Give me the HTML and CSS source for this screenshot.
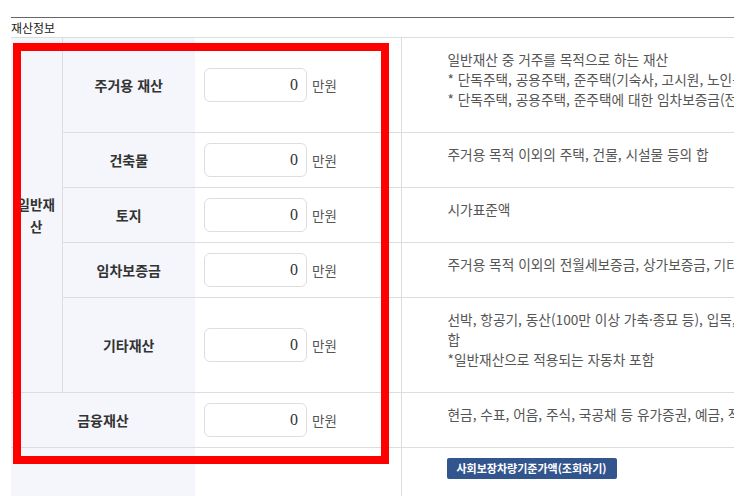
FILE: index.html
```html
<!DOCTYPE html>
<html lang="ko">
<head>
<meta charset="utf-8">
<title>재산정보</title>
<link rel="stylesheet" href="styles.css">
</head>
<body>
<div class="page">
  <section class="section">
    <h3 class="section-title">재산정보</h3>
    <table class="asset-table">
      <colgroup>
        <col class="c-group">
        <col class="c-label">
        <col class="c-input">
        <col class="c-desc">
      </colgroup>
      <tbody>
        <tr>
          <th class="group-label" rowspan="5">일반재산</th>
          <th class="label">주거용 재산</th>
          <td class="input-cell"><input class="amount" type="text" value="0"><span class="unit">만원</span></td>
          <td class="desc">일반재산 중 거주를 목적으로 하는 재산<br>* 단독주택, 공용주택, 준주택(기숙사, 고시원, 노인복지주택, 오피스텔)<br>* 단독주택, 공용주택, 준주택에 대한 임차보증금(전월세 보증금)</td>
        </tr>
        <tr>
          <th class="label">건축물</th>
          <td class="input-cell"><input class="amount" type="text" value="0"><span class="unit">만원</span></td>
          <td class="desc">주거용 목적 이외의 주택, 건물, 시설물 등의 합</td>
        </tr>
        <tr>
          <th class="label">토지</th>
          <td class="input-cell"><input class="amount" type="text" value="0"><span class="unit">만원</span></td>
          <td class="desc">시가표준액</td>
        </tr>
        <tr>
          <th class="label">임차보증금</th>
          <td class="input-cell"><input class="amount" type="text" value="0"><span class="unit">만원</span></td>
          <td class="desc">주거용 목적 이외의 전월세보증금, 상가보증금, 기타 보증금의 합</td>
        </tr>
        <tr>
          <th class="label">기타재산</th>
          <td class="input-cell"><input class="amount" type="text" value="0"><span class="unit">만원</span></td>
          <td class="desc">선박, 항공기, 동산(100만 이상 가축·종묘 등), 입목, 어업권, 회원권, 각종 권리 등의<br>합<br>*일반재산으로 적용되는 자동차 포함</td>
        </tr>
        <tr>
          <th class="label" colspan="2">금융재산</th>
          <td class="input-cell"><input class="amount" type="text" value="0"><span class="unit">만원</span></td>
          <td class="desc">현금, 수표, 어음, 주식, 국공채 등 유가증권, 예금, 적금, 보험 등의 합</td>
        </tr>
        <tr class="btn-row">
          <th class="label blank" colspan="2"></th>
          <td class="input-cell"></td>
          <td class="desc btn-cell"><button class="lookup-btn" type="button">사회보장차량기준가액(조회하기)</button></td>
        </tr>
      </tbody>
    </table>
  </section>
  <div class="highlight-box"></div>
</div>
</body>
</html>
```

FILE: styles.css
```css
html, body {
  margin: 0;
  padding: 0;
  overflow: hidden;
  background: #fff;
}

body {
  font-family: "Noto Sans CJK KR", "Noto Sans", sans-serif;
  color: #333;
}

.page {
  position: relative;
  width: 734px;
  height: 496px;
  overflow: hidden;
}

.section {
  margin: 17px 0 0 11px;
  width: 1100px;
  border-top: 1px solid #666;
}

.section-title {
  margin: 0;
  height: 19px;
  line-height: 19px;
  font-size: 12px;
  font-weight: normal;
  color: #222;
}

.asset-table {
  width: 1100px;
  table-layout: fixed;
  border-collapse: collapse;
  border-top: 1px solid #ddd;
}

.c-group { width: 51px; }
.c-label { width: 133px; }
.c-input { width: 206px; }

.asset-table th,
.asset-table td {
  padding: 0;
  border-bottom: 1px solid #ddd;
  vertical-align: middle;
}

.asset-table th.group-label {
  padding: 0 3px;
  background: #f4f6fb;
  border-right: 1px solid #ddd;
  font-size: 13.5px;
  font-weight: bold;
  line-height: 22px;
  color: #333;
  text-align: center;
}

.label {
  background: #f4f6fb;
  font-size: 14px;
  font-weight: bold;
  color: #333;
  text-align: center;
}

.asset-table td.input-cell {
  padding-left: 9px;
  white-space: nowrap;
}

.amount {
  box-sizing: border-box;
  width: 103px;
  height: 34px;
  padding: 0 8px;
  border: 1px solid #ddd;
  border-radius: 6px;
  text-align: right;
  font-family: "Liberation Serif", serif;
  font-size: 16px;
  color: #333;
  vertical-align: middle;
  background: #fff;
}

.unit {
  margin-left: 5px;
  font-size: 13.5px;
  color: #555;
  vertical-align: middle;
}

.asset-table td.desc {
  border-left: 1px solid #ddd;
  padding: 11px 0 23px 46px;
  vertical-align: top;
  font-size: 13.7px;
  line-height: 20px;
  color: #555;
  white-space: nowrap;
}

.btn-row th,
.btn-row td {
  border-bottom: none;
  height: 60px;
}

.asset-table td.btn-cell {
  padding: 10px 0 0 45px;
}

.lookup-btn {
  display: block;
  height: 21px;
  padding: 0 10px;
  border: none;
  border-radius: 2px;
  background: #32558e;
  color: #fff;
  font-family: "Noto Sans CJK KR", sans-serif;
  font-size: 11px;
  font-weight: bold;
  line-height: 21px;
}

.highlight-box {
  position: absolute;
  left: 13px;
  top: 43px;
  width: 376px;
  height: 421px;
  box-sizing: border-box;
  border: 8px solid #ff0000;
  pointer-events: none;
}
```
